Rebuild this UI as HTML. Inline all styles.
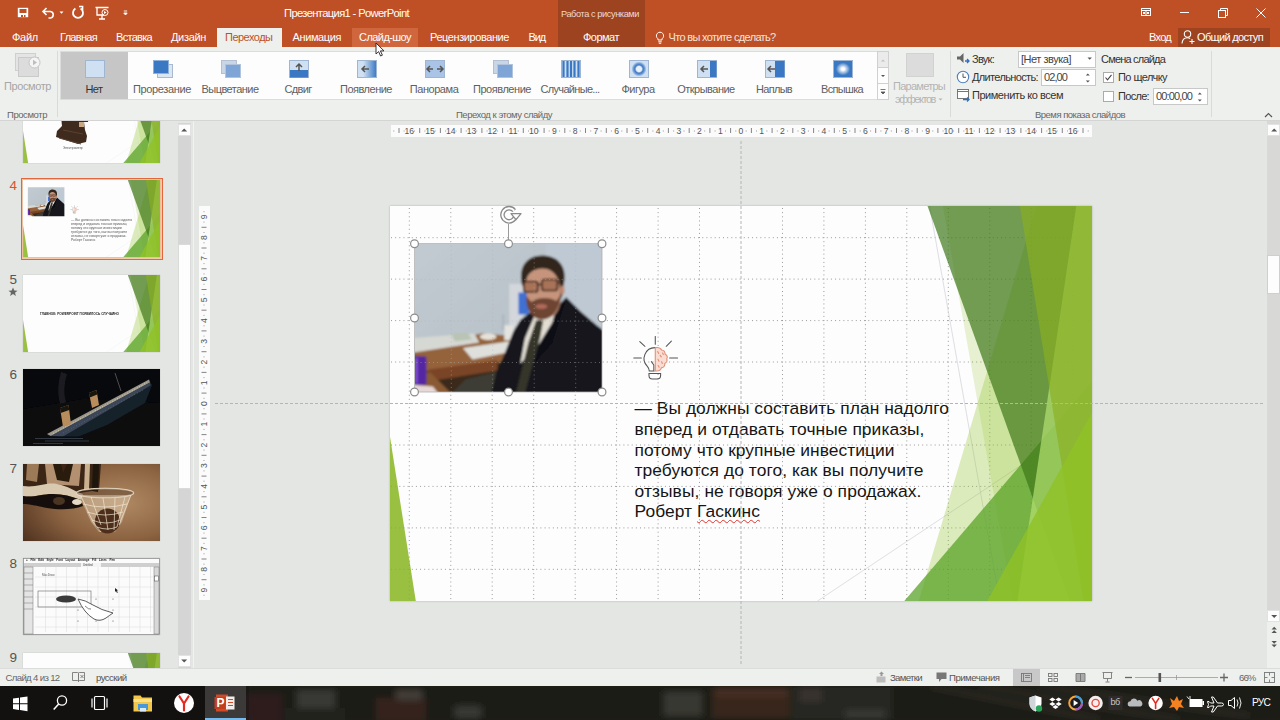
<!DOCTYPE html>
<html lang="ru"><head><meta charset="utf-8"><title>PowerPoint</title>
<style>
*{box-sizing:border-box;margin:0;padding:0}
html,body{width:1280px;height:720px;overflow:hidden;background:#e3e6e2;font-family:"Liberation Sans",sans-serif;}
.a{position:absolute}
.t{position:absolute;white-space:nowrap;line-height:1;transform-origin:0 0}
#title{left:0;top:0;width:1280px;height:47px;background:#bf5025}
#ctx{left:557.5px;top:0;width:87px;height:47px;background:#9d4320}
#ribbon{left:0;top:47px;width:1280px;height:74px;background:#eef0ed;border-bottom:1px solid #d4d4d4}
.tab{color:#fff;font-size:11px;top:32px}
.w{color:#fff}
.gl{font-size:11px;color:#555;top:82px;text-align:center;width:68px}
.grp{font-size:9.5px;color:#666;top:110px}
.rt{font-size:11px;color:#333}
#work{left:0;top:121px;width:1280px;height:547px;background:#e3e6e2}
#status{left:0;top:668px;width:1280px;height:18px;background:#eef0ed}
#task{left:0;top:686px;width:1280px;height:34px;background:#16130f}
</style></head><body>
<div id="title" class="a"></div>
<div id="ctx" class="a"></div>
<div id="ribbon" class="a"></div>
<div id="work" class="a"></div>
<div id="status" class="a"></div>
<div id="task" class="a"></div>
<svg width="0" height="0" style="position:absolute"><defs><symbol id="facet" viewBox="0 0 702 395"><path d="M539.6 0 L609.8 395 M702.0 212.0 L427.5 395" stroke="#d0d0d8" stroke-width="0.7" fill="none"/><polygon points="646.4,0.0 702.0,0.0 702.0,394.9 528.7,394.9" fill="#90c226" fill-opacity="0.3"/><polygon points="553.0,0.0 702.0,0.0 702.0,394.9 622.6,394.9" fill="#90c226" fill-opacity="0.2"/><polygon points="514.3,394.9 702.0,175.5 702.0,394.9" fill="#54a021" fill-opacity="0.72"/><polygon points="537.5,0.0 702.0,0.0 702.0,394.9 679.8,394.9" fill="#3f7819" fill-opacity="0.7"/><polygon points="686.3,0.0 702.0,0.0 702.0,394.9 627.5,394.9" fill="#b4e070" fill-opacity="0.7"/><polygon points="629.9,0.0 702.0,0.0 702.0,394.9 693.7,394.9" fill="#8aaf20" fill-opacity="0.65"/><polygon points="597.2,394.9 702.0,206.7 702.0,394.9" fill="#90c226" fill-opacity="0.8"/><polygon points="0.0,231.1 0.0,394.9 25.8,394.9" fill="#88b520" fill-opacity="0.85"/></symbol><symbol id="photo" viewBox="0 0 187 148.5" preserveAspectRatio="none"><defs><linearGradient id="wl" x1="0" y1="0" x2="1" y2="1"><stop offset="0" stop-color="#c2cbd1"/><stop offset="0.6" stop-color="#b8c2c9"/><stop offset="1" stop-color="#a9b3ba"/></linearGradient><filter id="bl" x="-5%" y="-5%" width="110%" height="110%"><feGaussianBlur stdDeviation="1.1"/></filter><clipPath id="pc"><rect width="187" height="148.5"/></clipPath></defs><g clip-path="url(#pc)"><g filter="url(#bl)"><rect x="-3" y="-3" width="193" height="155" fill="url(#wl)"/><rect x="130.7" y="-3" width="70" height="155" fill="#bfc9d3"/><polygon points="0.0,119.7 100.4,99.0 100.4,151.8 0.0,151.8" fill="#3b2c1e"/><polygon points="-2.8,105.9 66.0,89.4 100.4,92.2 100.4,116.2 15.6,128.8 -2.8,119.7" fill="#94623a"/><polygon points="13.3,125.4 82.1,116.2 82.1,126.5 15.6,136.9" fill="#7a4526"/><polygon points="0.0,126.5 15.6,128.8 36.2,149.5 0.0,149.5" fill="#8a5a34"/><polygon points="-2.8,94.0 59.1,89.4 64.2,98.6 -2.8,108.7" fill="#d6d8d3"/><polygon points="36.2,89.9 52.3,88.7 56.9,95.6 39.7,97.2" fill="#b9c4b4"/><polygon points="47.7,104.1 94.7,97.2 99.3,107.1 57.3,115.5" fill="#dfe0db"/><ellipse cx="72.9" cy="92.8" rx="8.3" ry="3.2" fill="#e6e2d8"/><rect x="94.0" y="39.9" width="13.8" height="43.6" fill="#d3d7dc"/><rect x="103.2" y="48.6" width="10.3" height="21.8" fill="#3f6fd2"/><rect x="89.0" y="81.2" width="9.6" height="15.1" fill="#e3e3df"/><rect x="87.1" y="70.4" width="1.8" height="16.0" fill="#aab2ba"/><rect x="-2.8" y="112.3" width="14.2" height="28.7" rx="2" fill="#5526a3"/><rect x="-0.5" y="113.9" width="3.2" height="25.2" fill="#7d4fd0"/><polygon points="-2.8,140.8 17.9,142.6 24.8,151.8 -2.8,151.8" fill="#e6d8d6"/><polygon points="36.2,149.5 50.0,135.7 86.7,126.5 86.7,151.8" fill="#3c3d35"/><polygon points="150.8,53.2 164.6,66.9 181.8,81.8 189.8,87.6 189.8,151.8 75.7,151.8 80.9,128.8 89.0,110.5 98.1,87.6 105.0,76.1 115.3,68.1 137.1,66.9" fill="#15151d"/><polygon points="118.8,72.7 140.5,65.8 137.1,78.4 124.5,99.0 105.0,119.7 109.6,94.5" fill="#e2ddd3"/><polygon points="121.0,76.1 127.9,76.6 124.5,94.5 109.6,149.5 100.4,149.5 113.0,99.0" fill="#35352c"/><polygon points="140.5,65.8 150.8,55.5 137.1,99.0 118.8,119.7 124.5,99.0 137.1,78.4" fill="#101017"/><path d="M117 70 q-3 -6 -5 -14 l-2 -18 q8 -22 30 -14 q10 8 6 24 q0 14 -6 22 q-10 8 -23 0z" fill="#c6947b"/><path d="M106.500 40 C103 22,112 11,128 11.500 C144 12,152 24,148.500 40 C148 47,147 52,145.500 55 L144 38 C140 28,134 24,126 24.500 C117 25,112 30,110.500 38 L109 46 Z" fill="#33251c"/><path d="M111 52 C110 66,118 76,127 75.500 C137 75,144 66,146 50 L141 57 C135 53,122 53,116 58 Z" fill="#6e4431"/><ellipse cx="126" cy="62.500" rx="6" ry="2.400" fill="#b06a5c"/><ellipse cx="147" cy="46" rx="2.200" ry="4.500" fill="#c08a72"/><rect x="108.500" y="37.500" width="14" height="10.500" rx="2.500" fill="#a87358" stroke="#3b2318" stroke-width="1.700"/><rect x="126.500" y="35.500" width="15.500" height="11" rx="2.500" fill="#a87358" stroke="#3b2318" stroke-width="1.700"/><path d="M122.500 41 l4 -1 M142 39 l6 -1.500" stroke="#3b2318" stroke-width="1.500"/></g></g></symbol><symbol id="bulb" viewBox="0 0 48 48"><g fill="none" stroke="#555" stroke-width="1.1" stroke-linecap="round"><path d="M23 0.5 v8 M0.8 22.7 h7.8 M37.8 22.7 h8.2 M7 5.7 l5.3 4.9 M34.3 10.6 l5.3-5.4"/><path d="M23 12 a11.3 11.3 0 0 0 -8 19.5 c1.5 1.6 1.8 3 1.8 4.6 h5 M16.5 38.8 h12 v2 q0 3.6 -3.5 3.6 h-5 q-3.5 0 -3.5-3.6z M19 26.5 l2.5 3.5 v6"/><path d="M23 12 c3 -0.5 5.5 0.5 6.5 2.5 c2.5 0.3 3.6 2.2 3.6 4 c2 1.2 2.6 3.4 1.8 5 c0.6 2 -0.4 4 -2 4.8 c0 2.6 -1.6 4.2 -3.6 4.6 c-0.6 2 -3 3.6 -6.3 3.2z" stroke="#e38d74" fill="#f9dcd2"/><path d="M25.5 16 l1 2 M28 20 l1.2 1.6 M25.8 24 l1 2 M29.5 26.5 l0.8 1.8 M26 30.5 l1 1.8 M30.5 17.5 l0.8 1.5" stroke="#e38d74"/></g></symbol></defs></svg>

<svg class="a" style="left:0;top:0" width="140" height="28" viewBox="0 0 140 28" fill="none" stroke="#fff" stroke-width="1.6">
<rect x="17.8" y="7.8" width="10.4" height="9.4" fill="#fff" stroke="none"/><rect x="19.5" y="9" width="7" height="4" fill="#bf5025" stroke="none"/><rect x="21" y="15" width="2" height="2" fill="#bf5025" stroke="none"/><rect x="24" y="15" width="1.5" height="2" fill="#bf5025" stroke="none"/>
<path d="M46.5 8 L43 11.5 L46.5 15 M43.5 11.5 H50.5 a3.3 3.3 0 0 1 0 6.5 H48.5"/>
<path d="M59.5 11.5 h4 l-2 2.2z" fill="#fff" stroke="none"/>
<path d="M80.6 8.6 a5 5 0 1 1 -5.2 0" stroke-width="1.8"/><path d="M79 6.6 h3.6 v3.8" stroke-width="1.5"/>
<path d="M95.5 7.5 h13 M97 8 v7 h7 M102 15.5 v3 M99 19 h6" stroke-width="1.3"/><circle cx="105" cy="12.5" r="3" stroke-width="1"/><path d="M104 11 l2.5 1.5 -2.5 1.5z" fill="#fff" stroke="none"/>
<path d="M123.8 11 h3.4 M123.8 13 h3.4 l-1.7 2z" stroke-width="0.9" fill="#fff"/>
</svg>
<div class="t" style="left:284px;top:8px;font-size:11.2px;color:#fff;letter-spacing:-0.638px;">Презентация1 - PowerPoint</div>
<div class="t" style="left:561px;top:10.3px;font-size:9.2px;color:#f0d9cf;letter-spacing:-0.406px;">Работа с рисунками</div>
<svg class="a" style="left:1130px;top:0" width="150" height="28" viewBox="0 0 150 28" fill="none" stroke="#fff" stroke-width="1">
<rect x="11.5" y="8.5" width="9" height="7"/><path d="M11.5 10.5 h9 M16 10.5 v5" /><rect x="13" y="12" width="2" height="2" fill="#fff" stroke="none"/><rect x="17" y="12" width="2" height="2" fill="#fff" stroke="none"/>
<path d="M50 12.5 h9"/>
<rect x="88.5" y="10.5" width="7" height="7"/><path d="M90.5 10.5 v-2 h7 v7 h-2"/>
<path d="M126.5 8.5 l9 9 M135.5 8.5 l-9 9"/>
</svg>
<div class="a" style="left:217px;top:28px;width:65px;height:20px;background:#eef0ed"></div>
<div class="a" style="left:352px;top:28px;width:66px;height:19px;background:#d0663d"></div>
<div class="a" style="left:1178px;top:28px;width:92px;height:19px;background:#9d4320"></div>
<div class="t" style="left:12px;top:32px;font-size:11px;color:#fff;letter-spacing:-0.262px;">Файл</div>
<div class="t" style="left:60px;top:32px;font-size:11px;color:#fff;letter-spacing:-0.696px;">Главная</div>
<div class="t" style="left:116px;top:32px;font-size:11px;color:#fff;letter-spacing:-0.699px;">Вставка</div>
<div class="t" style="left:171px;top:32px;font-size:11px;color:#fff;letter-spacing:-0.331px;">Дизайн</div>
<div class="t" style="left:225px;top:32px;font-size:11px;color:#bf5025;letter-spacing:-0.514px;">Переходы</div>
<div class="t" style="left:292.5px;top:32px;font-size:11px;color:#fff;letter-spacing:-0.393px;">Анимация</div>
<div class="t" style="left:359px;top:32px;font-size:11px;color:#fff;letter-spacing:-0.559px;">Слайд-шоу</div>
<div class="t" style="left:430px;top:32px;font-size:11px;color:#fff;letter-spacing:-0.425px;">Рецензирование</div>
<div class="t" style="left:528.5px;top:32px;font-size:11px;color:#fff;letter-spacing:-1.135px;">Вид</div>
<div class="t" style="left:583px;top:32px;font-size:11px;color:#fff;letter-spacing:-0.513px;">Формат</div>
<svg class="a" style="left:654px;top:30px" width="12" height="15" viewBox="0 0 12 15" fill="none" stroke="#fff" stroke-width="1"><path d="M4 10 v-1.2 a3.6 3.6 0 1 1 4 0 v1.2z M4.3 11.8 h3.4 M4.8 13.3 h2.4"/></svg>
<div class="t" style="left:668.5px;top:32px;font-size:11px;color:#f6e3da;letter-spacing:-0.664px;">Что вы хотите сделать?</div>
<div class="t" style="left:1149px;top:32px;font-size:11px;color:#fff;letter-spacing:-0.723px;">Вход</div>
<svg class="a" style="left:1181px;top:29px" width="15" height="16" viewBox="0 0 15 16" fill="none" stroke="#fff" stroke-width="1.1"><circle cx="6.5" cy="5" r="3.2"/><path d="M1 14.5 c0.3-4 2.5-5.8 5.5-5.8 c1 0 2 0.3 2.6 0.8 M11 10 v5 M8.5 12.5 h5"/></svg>
<div class="t" style="left:1197px;top:32px;font-size:11px;color:#fff;letter-spacing:-0.659px;">Общий доступ</div>

<div class="a" style="left:57px;top:51px;width:1px;height:66px;background:#dadada"></div>
<div class="a" style="left:60px;top:51px;width:829px;height:49px;background:#fdfdfd;border:1px solid #dcdcdc"></div>
<div class="a" style="left:61px;top:52px;width:67px;height:47px;background:#c6c6c6"></div>
<div class="a" style="left:877px;top:51px;width:12px;height:49px;background:#fdfdfd;border:1px solid #d0d0d0"></div>
<div class="a" style="left:877px;top:51px;width:12px;height:17px;background:#ebebeb;border:1px solid #d0d0d0"></div>
<div class="a" style="left:877px;top:83px;width:12px;height:1px;background:#d0d0d0"></div>
<svg class="a" style="left:877px;top:51px" width="12" height="49" viewBox="0 0 12 49"><path d="M4 10.5 l2-2 2 2z" fill="#c0c0c0"/><path d="M4 24 l2 2 2-2z" fill="#555"/><path d="M3.5 38.5 h5 M4 41 l2 2 2-2z" fill="#555" stroke="#555" stroke-width="0.8"/></svg>
<svg class="a" style="left:84px;top:59px" width="22" height="20" viewBox="-1 -1 22 20"><rect x="0.5" y="0.5" width="19" height="17" fill="#cfe0f2" stroke="#9fb6d3"/></svg>
<div class="t" style="left:85.5px;top:84px;font-size:11px;color:#333;letter-spacing:-0.578px;">Нет</div>
<svg class="a" style="left:152px;top:59px" width="22" height="20" viewBox="-1 -1 22 20"><rect x="4.5" y="4.5" width="15" height="13" fill="#dbe6f3" stroke="#a9b9cf"/><rect x="0.5" y="0.5" width="15" height="13" fill="#3b78c3" stroke="#8fb0da"/></svg>
<div class="t" style="left:133.0px;top:84px;font-size:11px;color:#606060;letter-spacing:-0.364px;">Прорезание</div>
<svg class="a" style="left:220px;top:59px" width="22" height="20" viewBox="-1 -1 22 20"><rect x="0.5" y="0.5" width="15" height="13" fill="#c9d6e6" stroke="#b3c0d0"/><rect x="4.5" y="4.5" width="15" height="13" fill="#7fa5d6" stroke="#b0c4de"/></svg>
<div class="t" style="left:201.5px;top:84px;font-size:11px;color:#606060;letter-spacing:-0.539px;">Выцветание</div>
<svg class="a" style="left:288px;top:59px" width="22" height="20" viewBox="-1 -1 22 20"><rect x="0.5" y="0.5" width="19" height="17" fill="#cfe0f2" stroke="#9fb6d3"/><rect x="1" y="10" width="18" height="7.5" fill="#3b78c3"/><path d="M10 4 v7 M7 7 l3-3 3 3" stroke="#555" stroke-width="1.5" fill="none"/></svg>
<div class="t" style="left:284.5px;top:84px;font-size:11px;color:#606060;letter-spacing:-0.675px;">Сдвиг</div>
<svg class="a" style="left:356px;top:59px" width="22" height="20" viewBox="-1 -1 22 20"><defs><linearGradient id="gp"><stop offset="0.3" stop-color="#cfe0f2"/><stop offset="1" stop-color="#3b78c3"/></linearGradient></defs><rect x="0.5" y="0.5" width="19" height="17" fill="url(#gp)" stroke="#9fb6d3"/><path d="M5 9 h7 M8 6 l-3 3 3 3" stroke="#555" stroke-width="1.5" fill="none"/></svg>
<div class="t" style="left:340.0px;top:84px;font-size:11px;color:#606060;letter-spacing:-0.495px;">Появление</div>
<svg class="a" style="left:424px;top:59px" width="22" height="20" viewBox="-1 -1 22 20"><rect x="0.5" y="0.5" width="19" height="17" fill="#a9c4e6" stroke="#9fb6d3"/><path d="M2 9 h6 M5 6 l-3 3 3 3 M12 9 h6 M15 6 l3 3 -3 3" stroke="#555" stroke-width="1.5" fill="none"/></svg>
<div class="t" style="left:409.8px;top:84px;font-size:11px;color:#606060;letter-spacing:-0.455px;">Панорама</div>
<svg class="a" style="left:492px;top:59px" width="22" height="20" viewBox="-1 -1 22 20"><rect x="0.5" y="0.5" width="15" height="13" fill="#c9d6e6" stroke="#b3c0d0"/><rect x="4.5" y="4.5" width="15" height="13" fill="#7fa5d6" stroke="#b0c4de"/></svg>
<div class="t" style="left:473.0px;top:84px;font-size:11px;color:#606060;letter-spacing:-0.456px;">Проявление</div>
<svg class="a" style="left:560px;top:59px" width="22" height="20" viewBox="-1 -1 22 20"><rect x="0.5" y="0.5" width="19" height="17" fill="#cfe0f2" stroke="#9fb6d3"/><path d="M2.5 1 v16 M6.5 1 v16 M10 1 v16 M13.5 1 v16 M17.5 1 v16" stroke="#3b78c3" stroke-width="2.2"/></svg>
<div class="t" style="left:540.5px;top:84px;font-size:11px;color:#606060;letter-spacing:-0.677px;">Случайные...</div>
<svg class="a" style="left:628px;top:59px" width="22" height="20" viewBox="-1 -1 22 20"><defs><radialGradient id="gf"><stop offset="0.35" stop-color="#e8f0fa"/><stop offset="0.55" stop-color="#3b78c3"/><stop offset="0.75" stop-color="#6f9cd6"/><stop offset="1" stop-color="#cfe0f2"/></radialGradient></defs><rect x="0.5" y="0.5" width="19" height="17" fill="#cfe0f2" stroke="#9fb6d3"/><circle cx="10" cy="9" r="7.5" fill="url(#gf)"/></svg>
<div class="t" style="left:621.5px;top:84px;font-size:11px;color:#606060;letter-spacing:-0.523px;">Фигура</div>
<svg class="a" style="left:696px;top:59px" width="22" height="20" viewBox="-1 -1 22 20"><rect x="0.5" y="0.5" width="19" height="17" fill="#cfe0f2" stroke="#9fb6d3"/><rect x="13" y="1" width="6.5" height="16" fill="#3b78c3"/><path d="M4 9 h7 M7 6 l-3 3 3 3" stroke="#555" stroke-width="1.5" fill="none"/></svg>
<div class="t" style="left:677.2px;top:84px;font-size:11px;color:#606060;letter-spacing:-0.511px;">Открывание</div>
<svg class="a" style="left:764px;top:59px" width="22" height="20" viewBox="-1 -1 22 20"><rect x="0.5" y="0.5" width="19" height="17" fill="#cfe0f2" stroke="#9fb6d3"/><rect x="10" y="1" width="9.5" height="16" fill="#3b78c3"/><path d="M3 9 h7 M6 6 l-3 3 3 3" stroke="#555" stroke-width="1.5" fill="none"/></svg>
<div class="t" style="left:756.0px;top:84px;font-size:11px;color:#606060;letter-spacing:-0.698px;">Наплыв</div>
<svg class="a" style="left:832px;top:59px" width="22" height="20" viewBox="-1 -1 22 20"><defs><radialGradient id="gv"><stop offset="0.15" stop-color="#fff"/><stop offset="0.75" stop-color="#3b78c3"/></radialGradient></defs><rect x="0.5" y="0.5" width="19" height="17" fill="url(#gv)" stroke="#9fb6d3"/></svg>
<div class="t" style="left:821.0px;top:84px;font-size:11px;color:#606060;letter-spacing:-0.672px;">Вспышка</div>
<svg class="a" style="left:14px;top:52px" width="30" height="28" viewBox="0 0 30 28"><rect x="1.5" y="1.5" width="20" height="17" fill="#e4e4e4" stroke="#cfcfcf"/><rect x="4.5" y="5.5" width="20" height="19" fill="#dcdcdc" stroke="#cacaca"/><circle cx="20.5" cy="10.5" r="5.5" fill="#f4f4f4" stroke="#c4c4c4"/><path d="M19 7.8 l4 2.7 -4 2.7z" fill="#bdbdbd"/></svg>
<div class="t" style="left:4px;top:81px;font-size:11px;color:#a6a6a6;letter-spacing:-0.406px;">Просмотр</div>
<div class="t" style="left:7px;top:110px;font-size:9.5px;color:#666;letter-spacing:-0.424px;">Просмотр</div>
<div class="t" style="left:456px;top:110px;font-size:9.5px;color:#666;letter-spacing:-0.479px;">Переход к этому слайду</div>
<div class="a" style="left:906px;top:53px;width:28px;height:24px;background:#dcdcdc;border:1px solid #d2d2d2"></div>
<div class="t" style="left:893px;top:81px;font-size:11px;color:#b4b4b4;letter-spacing:-0.738px;">Параметры</div>
<div class="t" style="left:895px;top:94px;font-size:11px;color:#b4b4b4;letter-spacing:-1.457px;">эффектов</div>
<svg class="a" style="left:938px;top:98px" width="6" height="4"><path d="M0.5 0.5 l2 2 2-2z" fill="#b4b4b4"/></svg>
<div class="a" style="left:950px;top:51px;width:1px;height:66px;background:#dadada"></div>
<div class="a" style="left:1211px;top:51px;width:1px;height:66px;background:#dadada"></div>
<svg class="a" style="left:956px;top:52px" width="15" height="14" viewBox="0 0 15 14"><path d="M1 4.5 h3 l3.5-3.5 v10 l-3.5-3.5 h-3z" fill="#666"/><path d="M9 9 h4 M11 7 l2 2 -2 2" stroke="#2f6fc0" stroke-width="1.3" fill="none"/></svg>
<div class="t" style="left:972px;top:54px;font-size:11px;color:#333;letter-spacing:-0.725px;">Звук:</div>
<div class="a" style="left:1018px;top:51px;width:78px;height:17px;background:#fff;border:1px solid #c8c8c8"></div>
<div class="t" style="left:1021px;top:54px;font-size:11px;color:#444;letter-spacing:-0.476px;">[Нет звука]</div>
<svg class="a" style="left:1087px;top:57px" width="6" height="4"><path d="M0.5 0.5 l2.2 2.2 2.2-2.2z" fill="#555"/></svg>
<svg class="a" style="left:956px;top:70px" width="14" height="14" viewBox="0 0 14 14"><circle cx="7" cy="7" r="5.7" fill="#fff" stroke="#4f7fbd" stroke-width="1.1"/><path d="M7 3.5 v3.8 h3" stroke="#555" stroke-width="1" fill="none"/></svg>
<div class="t" style="left:972px;top:72px;font-size:11px;color:#333;letter-spacing:-0.643px;">Длительность:</div>
<div class="a" style="left:1041px;top:69px;width:55px;height:17px;background:#fff;border:1px solid #c8c8c8"></div>
<div class="t" style="left:1044px;top:72px;font-size:11px;color:#444;letter-spacing:-0.906px;">02,00</div>
<svg class="a" style="left:1085px;top:72px" width="6" height="12"><path d="M0.8 3.5 l2-2 2 2z M0.8 8.5 l2 2 2-2z" fill="#555"/></svg>
<svg class="a" style="left:956px;top:88px" width="15" height="15" viewBox="0 0 15 15"><rect x="1.5" y="1.5" width="11" height="9" fill="#fff" stroke="#777"/><path d="M1.5 3.5 h11" stroke="#777"/><path d="M7 11.5 h6 M11 9.5 l2 2 -2 2" stroke="#2f6fc0" stroke-width="1.3" fill="none"/></svg>
<div class="t" style="left:972px;top:90px;font-size:11px;color:#333;letter-spacing:-0.465px;">Применить ко всем</div>
<div class="t" style="left:1101px;top:54px;font-size:11px;color:#333;letter-spacing:-0.799px;">Смена слайда</div>
<div class="a" style="left:1103px;top:72px;width:11px;height:11px;background:#fff;border:1px solid #ababab"></div>
<svg class="a" style="left:1103px;top:72px" width="11" height="11"><path d="M2.5 5.5 l2 2.3 4-5" stroke="#444" stroke-width="1.1" fill="none"/></svg>
<div class="t" style="left:1118px;top:72px;font-size:11px;color:#333;letter-spacing:-0.568px;">По щелчку</div>
<div class="a" style="left:1103px;top:91px;width:11px;height:11px;background:#fff;border:1px solid #ababab"></div>
<div class="t" style="left:1118px;top:91px;font-size:11px;color:#333;letter-spacing:-0.688px;">После:</div>
<div class="a" style="left:1153px;top:88px;width:55px;height:17px;background:#fff;border:1px solid #c8c8c8"></div>
<div class="t" style="left:1156px;top:91px;font-size:11px;color:#444;letter-spacing:-0.854px;">00:00,00</div>
<svg class="a" style="left:1197px;top:91px" width="6" height="12"><path d="M0.8 3.5 l2-2 2 2z M0.8 8.5 l2 2 2-2z" fill="#555"/></svg>
<div class="t" style="left:1035px;top:110px;font-size:9.5px;color:#666;letter-spacing:-0.512px;">Время показа слайдов</div>
<svg class="a" style="left:1264px;top:112px" width="9" height="6"><path d="M1 5 l3.5-3.5 3.5 3.5" stroke="#555" stroke-width="1.2" fill="none"/></svg>
<div class="a" style="left:0;top:121px;width:196px;height:547px;overflow:hidden">
<div class="a" style="left:20.5px;top:56.5px;width:142px;height:82px;background:#f7c9a8;border:1.5px solid #e2673d"></div>
<div class="a" style="left:23px;top:-35.5px;width:137px;height:77px;background:#fdfdfd;box-shadow:0 0 1px rgba(0,0,0,.25)"></div>
<div class="a" style="left:23px;top:59px;width:137px;height:77px;background:#fdfdfd;box-shadow:0 0 1px rgba(0,0,0,.25)"></div>
<div class="a" style="left:23px;top:153.5px;width:137px;height:77px;background:#fdfdfd;box-shadow:0 0 1px rgba(0,0,0,.25)"></div>
<div class="a" style="left:23px;top:248px;width:137px;height:77px;background:#fdfdfd;box-shadow:0 0 1px rgba(0,0,0,.25)"></div>
<div class="a" style="left:23px;top:342.5px;width:137px;height:77px;background:#fdfdfd;box-shadow:0 0 1px rgba(0,0,0,.25)"></div>
<div class="a" style="left:23px;top:437px;width:137px;height:77px;background:#fdfdfd;box-shadow:0 0 1px rgba(0,0,0,.25)"></div>
<div class="a" style="left:23px;top:531.5px;width:137px;height:77px;background:#fdfdfd;box-shadow:0 0 1px rgba(0,0,0,.25)"></div>
<svg class="a" style="left:23px;top:-35.5px" width="137" height="77" viewBox="0 0 137 77"><use href="#facet" width="137" height="77"/><path d="M38 30 h28 l-1 6 h-4 l1 8 2 6 -1 6 -8 2 -22 -7 1 -6 5 -5z" fill="#3f2a1e"/><path d="M40 44 l20 4 M36 52 l22 6" stroke="#5d4130" stroke-width="1"/><path d="M56 36 h5 v5 h-5z" fill="#c9a684"/></svg>
<div class="t" style="left:63px;top:25.2px;font-size:9px;color:#555;transform:scale(.36)">Электрометр</div>
<svg class="a" style="left:23px;top:59px" width="137" height="77" viewBox="0 0 137 77"><use href="#facet" width="137" height="77"/><use href="#photo" x="4.8" y="7.3" width="36.6" height="29"/><use href="#bulb" x="47.2" y="25.3" width="9" height="9"/></svg>
<div class="t" style="left:70.7px;top:96.8px;font-size:10px;color:#555;transform:scale(.34)">— Вы должны составить план надолго</div>
<div class="t" style="left:70.7px;top:100.8px;font-size:10px;color:#555;transform:scale(.34)">вперед и отдавать точные приказы,</div>
<div class="t" style="left:70.7px;top:104.8px;font-size:10px;color:#555;transform:scale(.34)">потому что крупные инвестиции</div>
<div class="t" style="left:70.7px;top:108.9px;font-size:10px;color:#555;transform:scale(.34)">требуются до того, как вы получите</div>
<div class="t" style="left:70.7px;top:112.9px;font-size:10px;color:#555;transform:scale(.34)">отзывы, не говоря уже о продажах.</div>
<div class="t" style="left:70.7px;top:116.9px;font-size:10px;color:#555;transform:scale(.34)">Роберт Гаскинс</div>
<svg class="a" style="left:23px;top:153.5px" width="137" height="77" viewBox="0 0 137 77"><use href="#facet" width="137" height="77"/></svg>
<div class="t" style="left:40px;top:190.5px;font-size:10px;font-weight:bold;color:#222;transform:scale(.315)">ГЛАВНОЕ: POWERPOINT ПОЯВИЛОСЬ СЛУЧАЙНО</div>
<svg class="a" style="left:23px;top:248px" width="137" height="77" viewBox="0 0 137 77"><defs><filter id="b6"><feGaussianBlur stdDeviation="0.55"/></filter></defs><rect width="137" height="77" fill="#08090c"/><g filter="url(#b6)"><polygon points="0,40 60,30 137,34 137,77 0,77" fill="#090b0f"/><polygon points="24,66 126,11 129,16 122,34 84,56 52,69 34,70" fill="#19212c"/><polygon points="24,65 126,10.500 127,13.500 28,67" fill="#9a968a"/><polygon points="28,67 127,13.500 127.500,16.500 40,67.500" fill="#3a4658"/><path d="M30 64.500 L124 13.500" stroke="#e8d9b0" stroke-width="0.7" stroke-dasharray="1.2 1.6"/><path d="M40 64 L122 20" stroke="#b9a77c" stroke-width="0.5" stroke-dasharray="0.8 2.200" opacity="0.7"/><polygon points="37,39 45.500,36 48,55 40,58" fill="#b98c5c"/><polygon points="37,39 45.500,36 46.200,41 37.600,44" fill="#17120f"/><polygon points="66,24 73.500,21 76,36 69,39" fill="#b98c5c"/><polygon points="66,24 73.500,21 74.200,25.500 66.700,28.500" fill="#17120f"/><path d="M92 4 l6 18" stroke="#7d7a70" stroke-width="0.6"/><path d="M40 34 q-4 -14 1 -30" stroke="#24242a" stroke-width="6" fill="none" opacity="0.75"/><rect x="0" y="67.500" width="137" height="9.500" fill="#07090d"/><path d="M12 69.500 h48 M22 72 h44 M10 74.500 h30" stroke="#4e5966" stroke-width="0.8" opacity="0.75"/></g></svg>
<svg class="a" style="left:23px;top:342.5px" width="137" height="77" viewBox="0 0 137 77"><defs><filter id="b7"><feGaussianBlur stdDeviation="0.6"/></filter><radialGradient id="sep" cx="0.72" cy="0.5" r="0.85"><stop offset="0" stop-color="#b08a64"/><stop offset="0.55" stop-color="#8d6442"/><stop offset="1" stop-color="#513420"/></radialGradient></defs><rect width="137" height="77" fill="url(#sep)"/><g filter="url(#b7)"><polygon points="0,0 78,0 76,26 50,30 0,22" fill="#3b2517"/><polygon points="4,0 16,0 14,18 3,16" fill="#9c7a58"/><polygon points="22,0 34,0 40,14 46,0 58,0 56,22 24,20" fill="#b29070"/><polygon points="30,0 38,0 40,9 44,0 50,0 46,18 34,16" fill="#2a1a10"/><polygon points="62,0 67,0 66,26 61,26" fill="#c9b08e"/><polygon points="70,0 76,0 75,28 69,27" fill="#1f140c"/><path d="M0 22 C14 24,22 18,34 20 C46 22,52 28,60 30 L58 36 C48 32,40 30,30 30 C18 30,10 34,0 32 Z" fill="#d9c9b0"/><path d="M0 32 C10 34,18 30,30 30 C40 30,48 32,58 36 L60 42 C50 46,36 46,24 44 C14 42,6 40,0 40 Z" fill="#160e08"/><ellipse cx="36" cy="37" rx="6" ry="4" fill="#4a3524"/><ellipse cx="54" cy="38" rx="5" ry="3" fill="#e6dac6"/><ellipse cx="82" cy="29" rx="28.500" ry="4.500" fill="none" stroke="#efe0c8" stroke-width="1.500"/><ellipse cx="82" cy="29" rx="28.500" ry="4.500" fill="#3a2416" opacity="0.35"/><polygon points="56,31 108,31 99,58 92,68 76,68 68,58" fill="#e2d2b8" opacity="0.45"/><circle cx="84.500" cy="57" r="12.500" fill="#4d2f1a"/><path d="M58 32 l12 26 8 10 M68 33 l10 28 M80 34 l5 32 M92 34 l-1 32 M102 33 l-8 30 M108 31 l-12 30 M60 40 q22 6 44 0 M64 48 q18 6 36 0 M69 56 q14 6 28 0 M74 63 q10 4 20 0" stroke="#f3e8d4" stroke-width="0.8" fill="none" opacity="0.85"/></g></svg>
<svg class="a" style="left:23px;top:437px" width="137" height="77" viewBox="0 0 137 77"><rect width="137" height="77" fill="#fbfbfb"/><rect x="0.5" y="0.5" width="136" height="76" fill="none" stroke="#8a8a8a" stroke-width="0.8"/><rect x="1" y="5" width="135" height="4" fill="#cfcfcf"/><rect x="58" y="5" width="20" height="4" fill="#f4f4f4"/><rect x="1" y="9" width="9" height="67" fill="#e4e4e4" stroke="#777" stroke-width="0.5"/><path d="M1 15 h9 M1 21 h9 M1 27 h9 M1 33 h9 M1 39 h9 M1 45 h9 M1 51 h9" stroke="#777" stroke-width="0.5"/><rect x="131" y="9" width="5" height="67" fill="#d8d8d8" stroke="#777" stroke-width="0.5"/><rect x="131.5" y="18" width="4" height="5" fill="#fff" stroke="#444" stroke-width="0.5"/><path d="M22.5 9 V74 M33.0 9 V74 M43.5 9 V74 M54.0 9 V74 M64.5 9 V74 M75.0 9 V74 M85.5 9 V74 M96.0 9 V74 M106.5 9 V74 M117.0 9 V74 M127.5 9 V74 M12 19.0 H131 M12 29.0 H131 M12 39.0 H131 M12 49.0 H131 M12 59.0 H131 M12 69.0 H131 " stroke="#d9d9d9" stroke-width="0.5"/><rect x="15" y="33" width="53" height="16" fill="none" stroke="#666" stroke-width="0.6"/><ellipse cx="43" cy="41" rx="10" ry="3.6" fill="#3a3a3a"/><path d="M55 41 q6 14 16 20 q6 3 12 -1 q4 -3 7 -5 q-12 -3 -20 -8 q-8 -5 -15 -6z" fill="#fff" stroke="#333" stroke-width="0.8"/><path d="M62 48 q4 4 6 3" stroke="#333" stroke-width="0.6" fill="none"/><g fill="#555"><circle cx="73" cy="41" r="0.6"/><circle cx="90" cy="41" r="0.6"/><circle cx="55" cy="52" r="0.6"/><circle cx="90" cy="52" r="0.6"/><circle cx="55" cy="63" r="0.6"/><circle cx="73" cy="63" r="0.6"/><circle cx="90" cy="63" r="0.6"/></g><path d="M92 30 l0 4 1 -1 1 2 0.8 -0.4 -1 -2 1.4 0z" fill="#222"/></svg>
<div class="t" style="left:26px;top:438.2px;font-size:10px;font-weight:bold;color:#222;transform:scale(.3);word-spacing:6px">● File Edit Style Font Layout Arrange Fill Lines Pen</div>
<div class="t" style="left:42px;top:453px;font-size:10px;color:#555;transform:scale(.3)">MacDraw</div>
<div class="t" style="left:83px;top:442.5px;font-size:10px;color:#333;transform:scale(.28)">Untitled</div>
<svg class="a" style="left:23px;top:531.5px" width="137" height="77" viewBox="0 0 137 77"><use href="#facet" width="137" height="77"/></svg>
<div class="t" style="left:9.5px;top:57.5px;font-size:13.5px;color:#d4552c">4</div>
<div class="t" style="left:9.5px;top:152.0px;font-size:13.5px;color:#555">5</div>
<div class="t" style="left:9.5px;top:246.5px;font-size:13.5px;color:#555">6</div>
<div class="t" style="left:9.5px;top:341.0px;font-size:13.5px;color:#555">7</div>
<div class="t" style="left:9.5px;top:435.5px;font-size:13.5px;color:#555">8</div>
<div class="t" style="left:9.5px;top:530.0px;font-size:13.5px;color:#555">9</div>
<svg class="a" style="left:8px;top:165.5px" width="10" height="10" viewBox="0 0 10 10"><path d="M5 0.5 l1.3 3 3.2 0.2 -2.5 2 0.9 3.2 -2.9-1.8 -2.9 1.8 0.9-3.2 -2.5-2 3.2-0.2z" fill="#666"/></svg>
<div class="a" style="left:178px;top:2px;width:12.5px;height:545px;background:#d5d5d5"></div>
<div class="a" style="left:178px;top:2.5px;width:12.5px;height:12.5px;background:#fdfdfd;border:1px solid #e2e2e2"></div>
<svg class="a" style="left:178px;top:3px" width="12" height="12"><path d="M3.2 7.5 l3-3 3 3z" fill="#555"/></svg>
<div class="a" style="left:178px;top:123px;width:12.5px;height:245px;background:#fdfdfd;border:1px solid #dadada"></div>
<div class="a" style="left:178px;top:533.5px;width:12.5px;height:12px;background:#fdfdfd;border:1px solid #e2e2e2"></div>
<svg class="a" style="left:178px;top:534px" width="12" height="12"><path d="M3.2 4.5 l3 3 3-3z" fill="#555"/></svg>
<div class="a" style="left:193px;top:0;width:1px;height:547px;background:#f2f2f2"></div>
</div>
<div class="a" style="left:391px;top:125px;width:701px;height:11.5px;background:#fbfbfb"></div>
<svg class="a" style="left:391px;top:125px" width="701" height="12" viewBox="391 125 701 12"><path d="M399.0 128 v5 M419.7 128 v5 M440.4 128 v5 M461.1 128 v5 M481.9 128 v5 M502.6 128 v5 M523.3 128 v5 M544.1 128 v5 M564.8 128 v5 M585.5 128 v5 M606.3 128 v5 M627.0 128 v5 M647.7 128 v5 M668.4 128 v5 M689.2 128 v5 M709.9 128 v5 M730.6 128 v5 M751.4 128 v5 M772.1 128 v5 M792.8 128 v5 M813.6 128 v5 M834.3 128 v5 M855.0 128 v5 M875.7 128 v5 M896.5 128 v5 M917.2 128 v5 M937.9 128 v5 M958.7 128 v5 M979.4 128 v5 M1000.1 128 v5 M1020.9 128 v5 M1041.6 128 v5 M1062.3 128 v5 M1083.0 128 v5 " stroke="#777" stroke-width="0.9"/><path d="M393.8 130.5 v1 M404.1 130.5 v1 M414.5 130.5 v1 M424.9 130.5 v1 M435.2 130.5 v1 M445.6 130.5 v1 M456.0 130.5 v1 M466.3 130.5 v1 M476.7 130.5 v1 M487.1 130.5 v1 M497.4 130.5 v1 M507.8 130.5 v1 M518.2 130.5 v1 M528.5 130.5 v1 M538.9 130.5 v1 M549.2 130.5 v1 M559.6 130.5 v1 M570.0 130.5 v1 M580.3 130.5 v1 M590.7 130.5 v1 M601.1 130.5 v1 M611.4 130.5 v1 M621.8 130.5 v1 M632.2 130.5 v1 M642.5 130.5 v1 M652.9 130.5 v1 M663.3 130.5 v1 M673.6 130.5 v1 M684.0 130.5 v1 M694.4 130.5 v1 M704.7 130.5 v1 M715.1 130.5 v1 M725.5 130.5 v1 M735.8 130.5 v1 M746.2 130.5 v1 M756.5 130.5 v1 M766.9 130.5 v1 M777.3 130.5 v1 M787.6 130.5 v1 M798.0 130.5 v1 M808.4 130.5 v1 M818.7 130.5 v1 M829.1 130.5 v1 M839.5 130.5 v1 M849.8 130.5 v1 M860.2 130.5 v1 M870.6 130.5 v1 M880.9 130.5 v1 M891.3 130.5 v1 M901.7 130.5 v1 M912.0 130.5 v1 M922.4 130.5 v1 M932.8 130.5 v1 M943.1 130.5 v1 M953.5 130.5 v1 M963.8 130.5 v1 M974.2 130.5 v1 M984.6 130.5 v1 M994.9 130.5 v1 M1005.3 130.5 v1 M1015.7 130.5 v1 M1026.0 130.5 v1 M1036.4 130.5 v1 M1046.8 130.5 v1 M1057.1 130.5 v1 M1067.5 130.5 v1 M1077.9 130.5 v1 M1088.2 130.5 v1 " stroke="#999" stroke-width="1"/><g font-family="Liberation Sans, sans-serif" font-size="8.6" fill="#555" text-anchor="middle"><text x="409.3" y="133.8">16</text><text x="430.1" y="133.8">15</text><text x="450.8" y="133.8">14</text><text x="471.5" y="133.8">13</text><text x="492.2" y="133.8">12</text><text x="513.0" y="133.8">11</text><text x="533.7" y="133.8">10</text><text x="554.4" y="133.8">9</text><text x="575.2" y="133.8">8</text><text x="595.9" y="133.8">7</text><text x="616.6" y="133.8">6</text><text x="637.4" y="133.8">5</text><text x="658.1" y="133.8">4</text><text x="678.8" y="133.8">3</text><text x="699.5" y="133.8">2</text><text x="720.3" y="133.8">1</text><text x="741.0" y="133.8">0</text><text x="761.7" y="133.8">1</text><text x="782.5" y="133.8">2</text><text x="803.2" y="133.8">3</text><text x="823.9" y="133.8">4</text><text x="844.6" y="133.8">5</text><text x="865.4" y="133.8">6</text><text x="886.1" y="133.8">7</text><text x="906.8" y="133.8">8</text><text x="927.6" y="133.8">9</text><text x="948.3" y="133.8">10</text><text x="969.0" y="133.8">11</text><text x="989.8" y="133.8">12</text><text x="1010.5" y="133.8">13</text><text x="1031.2" y="133.8">14</text><text x="1052.0" y="133.8">15</text><text x="1072.7" y="133.8">16</text></g></svg>
<div class="a" style="left:199px;top:206px;width:11px;height:394px;background:#fbfbfb"></div>
<svg class="a" style="left:198.4px;top:206px" width="12" height="394" viewBox="199 206 12 394"><path d="M202.5 227.3 h5 M202.5 248.0 h5 M202.5 268.8 h5 M202.5 289.5 h5 M202.5 310.2 h5 M202.5 330.9 h5 M202.5 351.7 h5 M202.5 372.4 h5 M202.5 393.1 h5 M202.5 413.9 h5 M202.5 434.6 h5 M202.5 455.3 h5 M202.5 476.1 h5 M202.5 496.8 h5 M202.5 517.5 h5 M202.5 538.2 h5 M202.5 559.0 h5 M202.5 579.7 h5 " stroke="#777" stroke-width="0.9"/><path d="M204.5 211.7 h1 M204.5 222.1 h1 M204.5 232.5 h1 M204.5 242.8 h1 M204.5 253.2 h1 M204.5 263.6 h1 M204.5 273.9 h1 M204.5 284.3 h1 M204.5 294.7 h1 M204.5 305.0 h1 M204.5 315.4 h1 M204.5 325.8 h1 M204.5 336.1 h1 M204.5 346.5 h1 M204.5 356.9 h1 M204.5 367.2 h1 M204.5 377.6 h1 M204.5 388.0 h1 M204.5 398.3 h1 M204.5 408.7 h1 M204.5 419.0 h1 M204.5 429.4 h1 M204.5 439.8 h1 M204.5 450.1 h1 M204.5 460.5 h1 M204.5 470.9 h1 M204.5 481.2 h1 M204.5 491.6 h1 M204.5 502.0 h1 M204.5 512.3 h1 M204.5 522.7 h1 M204.5 533.1 h1 M204.5 543.4 h1 M204.5 553.8 h1 M204.5 564.2 h1 M204.5 574.5 h1 M204.5 584.9 h1 M204.5 595.3 h1 " stroke="#999" stroke-width="1"/><g font-family="Liberation Sans, sans-serif" font-size="8.6" fill="#555" text-anchor="middle"><text transform="translate(208.2 216.9) rotate(-90)">9</text><text transform="translate(208.2 237.7) rotate(-90)">8</text><text transform="translate(208.2 258.4) rotate(-90)">7</text><text transform="translate(208.2 279.1) rotate(-90)">6</text><text transform="translate(208.2 299.9) rotate(-90)">5</text><text transform="translate(208.2 320.6) rotate(-90)">4</text><text transform="translate(208.2 341.3) rotate(-90)">3</text><text transform="translate(208.2 362.0) rotate(-90)">2</text><text transform="translate(208.2 382.8) rotate(-90)">1</text><text transform="translate(208.2 403.5) rotate(-90)">0</text><text transform="translate(208.2 424.2) rotate(-90)">1</text><text transform="translate(208.2 445.0) rotate(-90)">2</text><text transform="translate(208.2 465.7) rotate(-90)">3</text><text transform="translate(208.2 486.4) rotate(-90)">4</text><text transform="translate(208.2 507.1) rotate(-90)">5</text><text transform="translate(208.2 527.9) rotate(-90)">6</text><text transform="translate(208.2 548.6) rotate(-90)">7</text><text transform="translate(208.2 569.3) rotate(-90)">8</text><text transform="translate(208.2 590.1) rotate(-90)">9</text></g></svg>
<div class="a" style="left:1266.5px;top:121px;width:13.5px;height:547px;background:#d8d9d7"></div>
<div class="a" style="left:1267px;top:123.5px;width:13px;height:12.5px;background:#fdfdfd;border:1px solid #e2e2e2"></div>
<svg class="a" style="left:1267.5px;top:124px" width="12" height="12"><path d="M3.2 7.5 l3-3 3 3z" fill="#555"/></svg>
<div class="a" style="left:1267px;top:254.5px;width:13px;height:39px;background:#fdfdfd;border:1px solid #cfcfcf"></div>
<div class="a" style="left:1266.5px;top:622px;width:13.5px;height:46px;background:#eef0ed"></div>
<div class="a" style="left:1267px;top:609.5px;width:13px;height:12.5px;background:#fdfdfd;border:1px solid #e2e2e2"></div>
<svg class="a" style="left:1267.5px;top:609.5px" width="12" height="60" viewBox="0 0 12 60"><path d="M3.2 5 l3 3 3-3z" fill="#555"/><path d="M3.500 19.500 l2.700-2.700 2.700 2.700z M3.500 23 l2.700-2.700 2.700 2.700z M3.500 31 l2.700 2.700 2.700-2.700z M3.500 34.500 l2.700 2.700 2.700-2.700z" fill="#555"/></svg>
<div class="a" style="left:390px;top:206px;width:702px;height:395px;background:#fdfdfd;box-shadow:0 0 2px rgba(0,0,0,.25)"></div>
<svg class="a" style="left:0;top:121px" width="1280" height="547" viewBox="0 121 1280 547" fill="none"><path d="M409.3 208 V601 M450.8 208 V601 M492.2 208 V601 M533.7 208 V601 M575.2 208 V601 M616.6 208 V601 M658.1 208 V601 M699.5 208 V601 M782.5 208 V601 M823.9 208 V601 M865.4 208 V601 M906.8 208 V601 M948.3 208 V601 M989.8 208 V601 M1031.2 208 V601 M1072.7 208 V601 M391 237.7 H1092 M391 279.1 H1092 M391 320.6 H1092 M391 362.0 H1092 M391 445.0 H1092 M391 486.4 H1092 M391 527.9 H1092 M391 569.3 H1092 " stroke="#9a9a9a" stroke-width="1" stroke-dasharray="1 3.15"/></svg>
<svg class="a" style="left:390px;top:206px" width="702" height="395"><use href="#facet" width="702" height="395"/></svg>
<svg class="a" style="left:414.5px;top:243.5px" width="187.5" height="148.5"><use href="#photo" width="187.5" height="148.5"/></svg>
<svg class="a" style="left:414.5px;top:243.5px" width="187.5" height="148.5" viewBox="414.5 243.5 187.5 148.500" fill="none"><path d="M409.3 208 V601 M450.8 208 V601 M492.2 208 V601 M533.7 208 V601 M575.2 208 V601 M616.6 208 V601 M658.1 208 V601 M699.5 208 V601 M782.5 208 V601 M823.9 208 V601 M865.4 208 V601 M906.8 208 V601 M948.3 208 V601 M989.8 208 V601 M1031.2 208 V601 M1072.7 208 V601 M391 237.7 H1092 M391 279.1 H1092 M391 320.6 H1092 M391 362.0 H1092 M391 445.0 H1092 M391 486.4 H1092 M391 527.9 H1092 M391 569.3 H1092 " stroke="#b4b4b4" stroke-width="1" stroke-dasharray="1 3.15" opacity="0.5"/></svg>
<svg class="a" style="left:632.7px;top:336.2px" width="46.5" height="46.5"><use href="#bulb" width="46.5" height="46.5"/></svg>
<div class="t" style="left:634.5px;top:400.3px;font-size:17.4px;color:#151515;letter-spacing:0.045px;">— Вы должны составить план надолго</div>
<div class="t" style="left:634.5px;top:420.9px;font-size:17.4px;color:#151515;letter-spacing:0.066px;">вперед и отдавать точные приказы,</div>
<div class="t" style="left:634.5px;top:441.5px;font-size:17.4px;color:#151515;letter-spacing:0.043px;">потому что крупные инвестиции</div>
<div class="t" style="left:634.5px;top:462.1px;font-size:17.4px;color:#151515;letter-spacing:0.071px;">требуются до того, как вы получите</div>
<div class="t" style="left:634.5px;top:482.7px;font-size:17.4px;color:#151515;letter-spacing:0.095px;">отзывы, не говоря уже о продажах.</div>
<div class="t" style="left:634.5px;top:503.3px;font-size:17.4px;color:#151515;letter-spacing:0.074px;">Роберт <span style="text-decoration:underline wavy #e0352b 1px;text-underline-offset:2px">Гаскинс</span></div>
<svg class="a" style="left:0;top:121px" width="1280" height="547" viewBox="0 121 1280 547" fill="none"><path d="M741 141 V664 M215 403.5 H1264" stroke="#b4b4b8" stroke-width="1" stroke-dasharray="3 2"/><rect x="414.5" y="243.5" width="187.5" height="148.5" stroke="#b0b0b0" stroke-width="0.8"/><path d="M508.5 224 V243" stroke="#9a9a9a" stroke-width="1"/><circle cx="414.5" cy="243.8" r="3.9" fill="#fff" stroke="#8c8c8c" stroke-width="1.2"/><circle cx="508.5" cy="243.8" r="3.9" fill="#fff" stroke="#8c8c8c" stroke-width="1.2"/><circle cx="602" cy="243.8" r="3.9" fill="#fff" stroke="#8c8c8c" stroke-width="1.2"/><circle cx="414.5" cy="318" r="3.9" fill="#fff" stroke="#8c8c8c" stroke-width="1.2"/><circle cx="602" cy="318" r="3.9" fill="#fff" stroke="#8c8c8c" stroke-width="1.2"/><circle cx="414.5" cy="392" r="3.9" fill="#fff" stroke="#8c8c8c" stroke-width="1.2"/><circle cx="508.5" cy="392" r="3.9" fill="#fff" stroke="#8c8c8c" stroke-width="1.2"/><circle cx="602" cy="392" r="3.9" fill="#fff" stroke="#8c8c8c" stroke-width="1.2"/><g transform="translate(509,215.2)"><path d="M5.200 -4.600 A6.600 6.600 0 1 0 6.600 0.500" stroke="#8a8a8a" stroke-width="4.600" fill="none"/><path d="M5.200 -4.600 A6.600 6.600 0 1 0 6.600 0.500" stroke="#fff" stroke-width="2" fill="none"/><path d="M2 -1.500 H12 L7 4.500z" fill="#fff" stroke="#8a8a8a" stroke-width="1.300" stroke-linejoin="round"/></g></svg>
<div class="a" style="left:0;top:668px;width:1280px;height:1px;background:#dcdcdc"></div>
<div class="t" style="left:5.5px;top:673px;font-size:9.6px;color:#666;letter-spacing:-0.661px;">Слайд 4 из 12</div>
<svg class="a" style="left:72px;top:671px" width="14" height="12" viewBox="0 0 14 12" fill="none" stroke="#777" stroke-width="0.9"><path d="M0.5 1.5 h5 q1 0 1 1 v8 q0 -1 -1 -1 h-5z M12.5 1.5 h-5 q-1 0 -1 1 v8 q0 -1 1 -1 h5z M8.5 4 l3 3 M11.5 4 l-3 3"/></svg>
<div class="t" style="left:96px;top:673px;font-size:9.6px;color:#555;letter-spacing:-0.562px;">русский</div>
<svg class="a" style="left:876px;top:671px" width="11" height="12" viewBox="0 0 11 12"><path d="M3 3 l2.5-2.5 2.5 2.5 h-1.5 v2 h-2 v-2z" fill="#999"/><rect x="0.5" y="5.5" width="9" height="6" fill="#bdbdbd"/></svg>
<div class="t" style="left:890px;top:673px;font-size:9.6px;color:#555;letter-spacing:-0.672px;">Заметки</div>
<svg class="a" style="left:936px;top:672px" width="11" height="11" viewBox="0 0 11 11"><path d="M0.5 0.5 h10 v6.5 h-5 l-2.5 3 v-3 h-2.5z" fill="#777"/></svg>
<div class="t" style="left:949px;top:673px;font-size:9.6px;color:#555;letter-spacing:-0.489px;">Примечания</div>
<div class="a" style="left:1013px;top:669px;width:27px;height:17px;background:#c8c8c8"></div>
<svg class="a" style="left:1013px;top:669px" width="120" height="17" viewBox="0 0 120 17" fill="none" stroke="#777" stroke-width="0.9"><rect x="8.5" y="4.5" width="10" height="8"/><path d="M10.5 4.5 v8 M12 6.5 h5 M12 8.5 h5"/><rect x="35.5" y="4.5" width="3.5" height="3"/><rect x="41" y="4.5" width="3.5" height="3"/><rect x="35.5" y="9.5" width="3.5" height="3"/><rect x="41" y="9.5" width="3.5" height="3"/><path d="M63 4.5 h4.5 v8 h-4.5z M67.5 4.5 h4.5 v8 h-4.5z" fill="#aaa"/><path d="M89.5 3.5 h10 M90.5 4 v5.5 h8 v-5.5 M94.5 9.5 v3 M92.5 13 h4"/></svg>
<svg class="a" style="left:1124px;top:669px" width="106" height="17" viewBox="0 0 106 17" stroke="#666" fill="none"><path d="M1 8.5 h7" stroke-width="1.3"/><path d="M11 8.5 h83" stroke="#9a9a9a" stroke-width="0.8"/><path d="M52.5 6 v5" stroke="#9a9a9a" stroke-width="0.8"/><rect x="34.5" y="4" width="2.6" height="9" fill="#555" stroke="none"/><path d="M96 8.5 h8 M100 4.5 v8" stroke-width="1.3"/></svg>
<div class="t" style="left:1239px;top:673px;font-size:9.6px;color:#666;letter-spacing:-0.901px;">66%</div>
<svg class="a" style="left:1263px;top:671px" width="13" height="13" viewBox="0 0 13 13" fill="none" stroke="#777" stroke-width="0.9"><rect x="1.5" y="1.5" width="10" height="10"/><path d="M6.5 1.5 v3 M6.5 8.5 v3 M1.5 6.5 h3 M8.5 6.5 h3"/></svg>
<svg class="a" style="left:0;top:686px" width="1280" height="34" viewBox="0 0 1280 34"><defs><filter id="tb" x="-5%" y="-50%" width="110%" height="200%"><feGaussianBlur stdDeviation="3"/></filter><clipPath id="tc"><rect width="1280" height="34"/></clipPath></defs><rect width="1280" height="34" fill="#121110"/><g clip-path="url(#tc)"><g filter="url(#tb)">
<rect x="246" y="-4" width="1040" height="42" fill="#1e1c19"/>
<rect x="246" y="8" width="36" height="30" fill="#2f1f1d"/>
<rect x="297" y="4" width="38" height="18" fill="#393936"/>
<rect x="285" y="22" width="60" height="14" fill="#22201e"/>
<rect x="374" y="10" width="54" height="26" fill="#47272200"/><rect x="376" y="12" width="50" height="24" fill="#36221e"/>
<rect x="396" y="4" width="26" height="10" fill="#433d39"/>
<rect x="455" y="20" width="26" height="12" fill="#393734"/>
<rect x="490" y="0" width="160" height="34" fill="#1c1a17"/>
<rect x="664" y="6" width="38" height="24" fill="#393733"/>
<rect x="712" y="2" width="78" height="30" fill="#38281c"/>
<rect x="716" y="2" width="72" height="9" fill="#442f22"/>
<rect x="792" y="0" width="100" height="34" fill="#272522"/>
<rect x="800" y="2" width="22" height="14" fill="#37332e"/>
<rect x="845" y="24" width="40" height="8" fill="#393734"/>
<rect x="900" y="-4" width="390" height="42" fill="#1c1a17"/>
<path d="M930 0 L1100 34 M980 0 L1180 34 M1040 0 L1250 30" stroke="#2e2b27" stroke-width="4"/>
</g></g><rect x="205" y="0" width="41" height="34" fill="#3b3a38"/><rect x="205" y="32" width="41" height="2" fill="#76b9ed"/></svg>
<svg class="a" style="left:0;top:686px" width="260" height="34" viewBox="0 0 260 34">
<path d="M13 12.6 l6-0.9 v5.6 h-6z M20 11.5 l7.5-1.1 v6.9 h-7.5z M13 18.3 h6 v5.6 l-6-0.9z M20 18.3 h7.5 v6.9 l-7.5-1.1z" fill="#fff"/>
<circle cx="62" cy="14.5" r="4.6" fill="none" stroke="#fff" stroke-width="1.3"/><path d="M58.7 18 l-5 5.5" stroke="#fff" stroke-width="1.5"/>
<rect x="94.5" y="10.5" width="10" height="13" rx="1" fill="none" stroke="#fff" stroke-width="1.2"/><path d="M92 12.5 v9 M107 12.5 v9" stroke="#fff" stroke-width="1.2"/>
<path d="M133.5 9.5 h7 l1.5 2 h10 v14 h-18.5z" fill="#f3c64c"/><rect x="133.5" y="13" width="18.5" height="3" fill="#fbe08a"/><rect x="138" y="18" width="10" height="6" fill="#4a98d8"/><rect x="140" y="22" width="6" height="3.5" fill="#d7ecfb"/>
<circle cx="184" cy="17" r="10" fill="#fff"/><path d="M179.5 10.5 l4.5 7 v7 M188.5 10.5 l-4.5 7" stroke="#e42a20" stroke-width="2.2" fill="none" stroke-linecap="round"/>
<rect x="216" y="8.5" width="12" height="17" fill="#d04a28"/><rect x="226" y="10.5" width="8.5" height="13" fill="#f4ede9"/><path d="M228 13.5 h5 M228 16.5 h5 M228 19.5 h5" stroke="#d04a28" stroke-width="1"/><rect x="214.5" y="11" width="11" height="12" fill="#c13f1f"/></svg>
<div class="t" style="left:216.5px;top:697px;font-size:12px;font-weight:bold;color:#fff">P</div>
<svg class="a" style="left:1020px;top:686px" width="230" height="34" viewBox="1020 0 230 34">
<path d="M1035.5 9.5 l6 2 v6 q0 5 -6 8 q-6 -3 -6 -8 v-6z" fill="#fff"/><path d="M1035.5 9.5 v16 q-6 -3 -6 -8 v-6z" fill="#cfd6da"/><circle cx="1039" cy="22.5" r="3.2" fill="#27a558"/>
<g transform="translate(1055.5 17) scale(0.78) translate(-1055.5 -17)"><path d="M1051.5 10 l4 2.6 -4 2.6 -4-2.6z M1059.5 10 l4 2.6 -4 2.6 -4-2.6z M1051.5 15.6 l4 2.6 -4 2.6 -4-2.6z M1059.5 15.6 l4 2.6 -4 2.6 -4-2.6z M1055.5 19.6 l4 2.6 -4 2.6 -4-2.6z" fill="#fff"/></g>
<circle cx="1075.6" cy="17" r="6.4" fill="#1b1b22" stroke="#f2a53a" stroke-width="2"/><path d="M1075.6 10.6 a6.4 6.4 0 0 1 6.4 6.4" stroke="#3aa0e8" stroke-width="2" fill="none"/><path d="M1082 17 a6.4 6.4 0 0 1 -6.4 6.4" stroke="#9b55d8" stroke-width="2" fill="none"/><path d="M1073.6 14 l4.6 3 -4.6 3z" fill="#fff"/>
<circle cx="1095.6" cy="17" r="7.2" fill="#f5eeee"/><circle cx="1095.6" cy="17" r="3.6" fill="none" stroke="#e0473e" stroke-width="1.3"/>
<rect x="1108.5" y="10" width="14" height="14" fill="#2e2c2a"/>
<path transform="translate(1135.5 17) scale(0.8) translate(-1135.5 -17)" d="M1128 21.5 a3.5 3.5 0 0 1 1.2-6.8 a4.6 4.6 0 0 1 8.6-0.6 a3.7 3.7 0 0 1 4 7.4z" fill="#b9bcbf"/>
<circle cx="1155.6" cy="17" r="7.2" fill="#fff"/><path d="M1152.4 12.4 l3.2 5 v5 M1158.8 12.4 l-3.2 5" stroke="#e42a20" stroke-width="1.6" fill="none" stroke-linecap="round"/>
<path d="M1170 12 l4 3 3-5 2 5 4-2 -2 5 3 4 -5-1 -2 4 -3-4 -5 1 3-4z" fill="#f58220"/>
<rect x="1189.5" y="13" width="13" height="8" fill="#fff"/><rect x="1202.5" y="15" width="1.5" height="4" fill="#fff"/><path d="M1187 10.5 l2 2.5 M1190 10 v3" stroke="#fff" stroke-width="0.9"/>
<path d="M1207.5 15.500 l1.500 0 1.500 1.500 h3.500 l-2.500 -6 h1.800 l4.200 6 h4 q2 0 2 1.500 q0 1.500 -2 1.500 h-4 l-4.200 6 h-1.800 l2.500 -6 h-3.500 l-1.500 1.500 h-1.500 l1 -3z" fill="none" stroke="#fff" stroke-width="1"/>
<path d="M1228.5 14.5 h2.500 l3.500-3 v11 l-3.500-3 h-2.500z" fill="none" stroke="#fff" stroke-width="1"/><path d="M1237 13.500 q2 3.500 0 7 M1239.500 11.500 q3 5.500 0 11" stroke="#fff" stroke-width="0.9" fill="none"/>
</svg>
<div class="t" style="left:1110.5px;top:698px;font-size:9px;color:#c9c9c9;letter-spacing:-0.6px">bб</div>
<div class="t" style="left:1252px;top:697.5px;font-size:10.2px;color:#fff;letter-spacing:-0.802px;">РУС</div>
<!-- cursor -->
<svg class="a" style="left:375px;top:42px" width="12" height="16" viewBox="0 0 12 16"><path d="M1 1 v11 l2.6-2.4 2 4.4 1.8-0.8 -2-4.3 h3.6z" fill="#fff" stroke="#222" stroke-width="0.9"/></svg>

</body></html>
